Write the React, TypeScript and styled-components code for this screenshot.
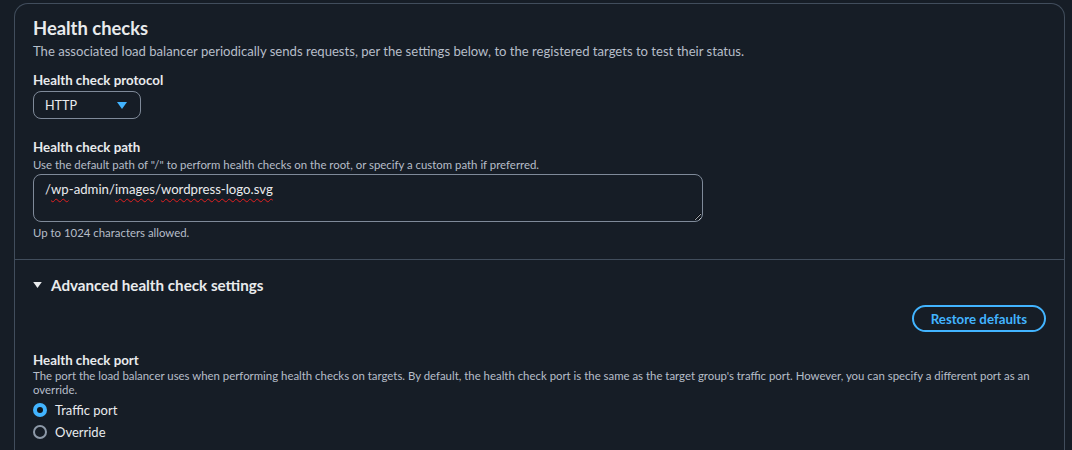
import React from "react";
import styled, { createGlobalStyle } from "styled-components";

const Global = createGlobalStyle`
  html, body { margin: 0; padding: 0; background: #161d26; }
  body { font-family: Lato, "Noto Sans", sans-serif; color: #e9ebed; }
  * { box-sizing: border-box; }
`;

const Page = styled.div`
  width: 1072px;
  height: 450px;
  overflow: hidden;
  padding: 3px 7px 0 14px;
`;

const Container = styled.section`
  border: 1px solid #414d5c;
  border-bottom: none;
  border-radius: 14px 14px 0 0;
  min-height: 460px;
`;

const Section = styled.div<{ $top: number; $bottom: number; $divider?: boolean }>`
  display: flex;
  flex-direction: column;
  align-items: flex-start;
  padding: ${(p) => p.$top}px 18px ${(p) => p.$bottom}px 18px;
  border-bottom: ${(p) => (p.$divider ? "1px solid #414d5c" : "none")};
`;

const Title = styled.h2`
  margin: 0;
  font-size: 18.4px;
  line-height: 22px;
  font-weight: 700;
  color: #e9ebed;
`;

const Desc = styled.p<{ $size?: number; $lh?: number; $mt?: number }>`
  margin: ${(p) => p.$mt ?? 0}px 0 0 0;
  font-size: ${(p) => p.$size ?? 13.1}px;
  line-height: ${(p) => p.$lh ?? 20}px;
  color: #b6bec9;
`;

const Label = styled.div<{ $mt: number }>`
  margin-top: ${(p) => p.$mt}px;
  font-size: 13.3px;
  line-height: 18px;
  font-weight: 700;
  color: #e9ebed;
`;

const Select = styled.div`
  margin-top: 2px;
  width: 108px;
  height: 28px;
  border: 1px solid #7f8a99;
  border-radius: 8px;
  display: flex;
  align-items: center;
  justify-content: space-between;
  padding: 0 13px 0 11px;
  font-size: 12.6px;
  color: #e9ebed;
`;

const TextBox = styled.div`
  margin-top: 1px;
  width: 670px;
  height: 48px;
  border: 1px solid #7f8a99;
  border-radius: 8px;
  padding: 4px 11px;
  font-size: 13.2px;
  line-height: 20px;
  color: #e9ebed;
  resize: vertical;
  overflow: auto;
`;

const Misspelled = styled.span`
  text-decoration: underline wavy #e02020;
  text-decoration-thickness: 1px;
  text-underline-offset: 4px;
  text-decoration-skip-ink: none;
`;

const ExpandHeader = styled.div`
  display: flex;
  align-items: center;
  gap: 9px;
  font-size: 15.2px;
  line-height: 20px;
  font-weight: 700;
  color: #e9ebed;
`;

const ActionRow = styled.div`
  align-self: stretch;
  display: flex;
  justify-content: flex-end;
  margin-top: 10px;
`;

const OutlineButton = styled.button`
  height: 27px;
  padding: 0 17px;
  border: 2px solid #42b4ff;
  border-radius: 14px;
  background: transparent;
  color: #42b4ff;
  font-family: inherit;
  font-size: 13.3px;
  font-weight: 700;
  line-height: 20px;
`;

const RadioList = styled.div`
  margin-top: 2px;
  display: flex;
  flex-direction: column;
`;

const RadioRow = styled.label`
  display: flex;
  align-items: center;
  gap: 8px;
  height: 22px;
  font-size: 13px;
  color: #e9ebed;
`;

const RadioDot = styled.span<{ $checked?: boolean }>`
  width: 14px;
  height: 14px;
  border-radius: 50%;
  display: inline-flex;
  align-items: center;
  justify-content: center;
  background: ${(p) => (p.$checked ? "#42b4ff" : "transparent")};
  border: ${(p) => (p.$checked ? "none" : "2px solid #8d99a8")};
  &::after {
    content: "";
    display: ${(p) => (p.$checked ? "block" : "none")};
    width: 6px;
    height: 6px;
    border-radius: 50%;
    background: #0f141a;
  }
`;

const Caret = ({ color, w, h }: { color: string; w: number; h: number }) => (
  <svg width={w} height={h} viewBox="0 0 10 7">
    <path d="M0 0 L10 0 L5 7 Z" fill={color} />
  </svg>
);

export default function App() {
  return (
    <>
      <Global />
      <Page>
        <Container>
          <Section $top={13} $bottom={18} $divider>
            <Title>Health checks</Title>
            <Desc $mt={2}>
              The associated load balancer periodically sends requests, per the settings below, to the
              registered targets to test their status.
            </Desc>
            <Label $mt={10}>Health check protocol</Label>
            <Select>
              <span>HTTP</span>
              <Caret color="#42b4ff" w={10} h={7} />
            </Select>
            <Label $mt={19}>Health check path</Label>
            <Desc $size={11.4} $lh={16} $mt={1}>
              Use the default path of "/" to perform health checks on the root, or specify a custom path if
              preferred.
            </Desc>
            <TextBox role="textbox">
              /<Misspelled>wp</Misspelled>-admin/<Misspelled>images</Misspelled>/
              <Misspelled>wordpress-logo.svg</Misspelled>
            </TextBox>
            <Desc $size={11.4} $lh={16} $mt={3}>
              Up to 1024 characters allowed.
            </Desc>
          </Section>
          <Section $top={15} $bottom={0}>
            <ExpandHeader>
              <Caret color="#e9ebed" w={9} h={6} />
              <span>Advanced health check settings</span>
            </ExpandHeader>
            <ActionRow>
              <OutlineButton>Restore defaults</OutlineButton>
            </ActionRow>
            <Label $mt={19}>Health check port</Label>
            <Desc $size={11.4} $lh={14}>
              The port the load balancer uses when performing health checks on targets. By default, the health
              check port is the same as the target group's traffic port. However, you can specify a different
              port as an override.
            </Desc>
            <RadioList>
              <RadioRow>
                <RadioDot $checked />
                Traffic port
              </RadioRow>
              <RadioRow>
                <RadioDot />
                Override
              </RadioRow>
            </RadioList>
          </Section>
        </Container>
      </Page>
    </>
  );
}
